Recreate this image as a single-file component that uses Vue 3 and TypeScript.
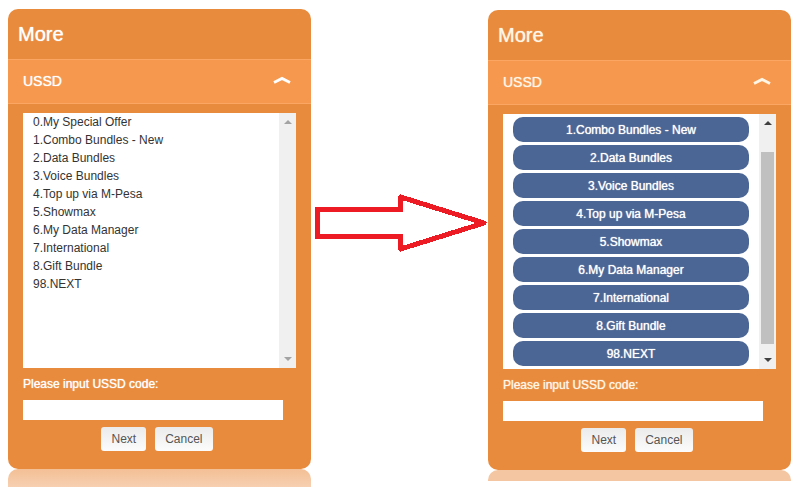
<script setup lang="ts">
interface Panel {
  id: string
  kind: 'plain' | 'pills'
  items: string[]
}

const options: string[] = [
  '1.Combo Bundles - New',
  '2.Data Bundles',
  '3.Voice Bundles',
  '4.Top up via M-Pesa',
  '5.Showmax',
  '6.My Data Manager',
  '7.International',
  '8.Gift Bundle',
  '98.NEXT',
]

const panels: Panel[] = [
  { id: 'before', kind: 'plain', items: ['0.My Special Offer', ...options] },
  { id: 'after', kind: 'pills', items: options },
]
</script>

<template>
  <main class="compare">
    <section v-for="panel in panels" :key="panel.id" class="column" :class="[panel.id, panel.kind]">
      <div class="card">
        <h1 class="title">More</h1>
        <h2 class="section">
          <span>USSD</span>
          <svg class="chevron" viewBox="0 0 18 8" aria-hidden="true">
            <path d="M1 6.6 L9 2.4 L17 6.6" />
          </svg>
        </h2>
        <div class="body">
          <div class="viewer">
            <ul class="list">
              <li v-for="item in panel.items" :key="item">
                <button v-if="panel.kind === 'pills'" type="button" class="pill">{{ item }}</button>
                <template v-else>{{ item }}</template>
              </li>
            </ul>
            <div class="scrollbar" aria-hidden="true">
              <svg class="tick" viewBox="0 0 8 4"><path d="M0 4 L4 0 L8 4 Z" /></svg>
              <div class="track"><div class="thumb"></div></div>
              <svg class="tick" viewBox="0 0 8 4"><path d="M0 0 L4 4 L8 0 Z" /></svg>
            </div>
          </div>
          <label class="prompt" :for="`code-${panel.id}`">Please input USSD code:</label>
          <input :id="`code-${panel.id}`" class="code" type="text" />
          <div class="actions">
            <button type="button" class="action">Next</button>
            <button type="button" class="action">Cancel</button>
          </div>
        </div>
      </div>
      <div class="reflection" aria-hidden="true"></div>
    </section>

    <svg class="arrow" viewBox="0 0 177 60" aria-hidden="true">
      <path d="M89.5 4 L173 30 L89.5 56" />
      <path class="shaft" d="M89.5 4 V16.5 H6.5 V43.5 H89.5 V56" />
      <path class="shaft" d="M87 16.5 H92 M87 43.5 H92" />
    </svg>
  </main>
</template>

<style>
body {
  margin: 0;
  background: #fff;
}
</style>

<style scoped>
.compare {
  display: grid;
  grid-template-columns: 303fr 177fr 303fr;
  align-items: start;
  box-sizing: border-box;
  height: 100vh;
  padding: 9px 9px 0 8px;
  overflow: hidden;
  font-family: "Liberation Sans", Arial, sans-serif;
  font-size: 12px;
  --light: #fff;
}

.before {
  grid-area: 1 / 1;
}

.after {
  grid-area: 1 / 3;
  padding-top: 1px;
  --light: #fff6e6;
}

.card {
  overflow: hidden;
  border-radius: 10px;
  background: #e98b3d;
  color: var(--light);
}

.title,
.section {
  margin: 0;
  font-weight: 400;
  text-shadow: 0 0 1px var(--light);
}

.title {
  padding: 0 10px;
  font-size: 20px;
  line-height: 50px;
}

.section {
  display: flex;
  align-items: center;
  justify-content: space-between;
  padding: 0 20px 0 15px;
  border-top: 1px solid #fba663;
  border-bottom: 1px solid #fba663;
  background: #f6984e;
  font-size: 14px;
  line-height: 43px;
}

.chevron {
  width: 18px;
  height: 8px;
  margin-bottom: 4px;
  fill: none;
  stroke: var(--light);
  stroke-width: 2.8;
}

.body {
  display: flex;
  flex-direction: column;
  padding: 9px 15px 18px;
}

.viewer {
  display: flex;
  height: 255px;
  background: #fff;
}

.list {
  flex: 1;
  margin: 0;
  padding: 0 10px;
  list-style: none;
  line-height: 18px;
  color: #333;
}

.pills .list {
  display: flex;
  flex-direction: column;
  gap: 3px;
  padding-top: 3px;
}

.pill {
  display: block;
  width: 100%;
  height: 25px;
  padding: 0;
  border: 0;
  border-radius: 10px;
  background: #4b6694;
  color: #fff;
  font: inherit;
  text-shadow: 0 0 1px #fff;
}

.scrollbar {
  display: flex;
  flex-direction: column;
  align-items: center;
  box-sizing: border-box;
  width: 17px;
  padding: 7px 2px;
  background: #f0f0f0;
}

.tick {
  width: 8px;
  height: 4px;
  fill: #a3a3a3;
}

.pills .tick {
  fill: #404040;
}

.track {
  flex: 1;
  width: 100%;
}

.pills .track {
  display: flex;
  padding: 27px 0 14px;
}

.pills .thumb {
  flex: 1;
  background: #c0c0c0;
}

.prompt {
  padding: 7px 0;
  line-height: 18px;
  text-shadow: 0 0 1px var(--light);
}

.code {
  box-sizing: border-box;
  height: 20px;
  margin-right: 13px;
  padding: 0 4px;
  border: 0;
  background: #fff;
  font: inherit;
}

.actions {
  display: flex;
  justify-content: center;
  gap: 9px;
  padding: 7px 5px 0 0;
}

.action {
  height: 24px;
  padding: 0 10px;
  border: 0;
  border-radius: 3px;
  background: linear-gradient(#ebebeb, #fcfcfc);
  color: #555;
  font: inherit;
}

.reflection {
  height: 18px;
  border-radius: 10px 10px 0 0;
  background: linear-gradient(#f3bf95, #f7d0b1);
}

.after .reflection {
  height: 11px;
  background: #f4c6a1;
}

.arrow {
  grid-area: 1 / 2;
  width: 100%;
  margin-top: 184px;
  fill: none;
  stroke: #ed1c24;
  stroke-width: 5;
  stroke-linecap: round;
  stroke-linejoin: round;
  shape-rendering: crispEdges;
}

.shaft {
  stroke-linecap: butt;
  stroke-linejoin: miter;
}
</style>
